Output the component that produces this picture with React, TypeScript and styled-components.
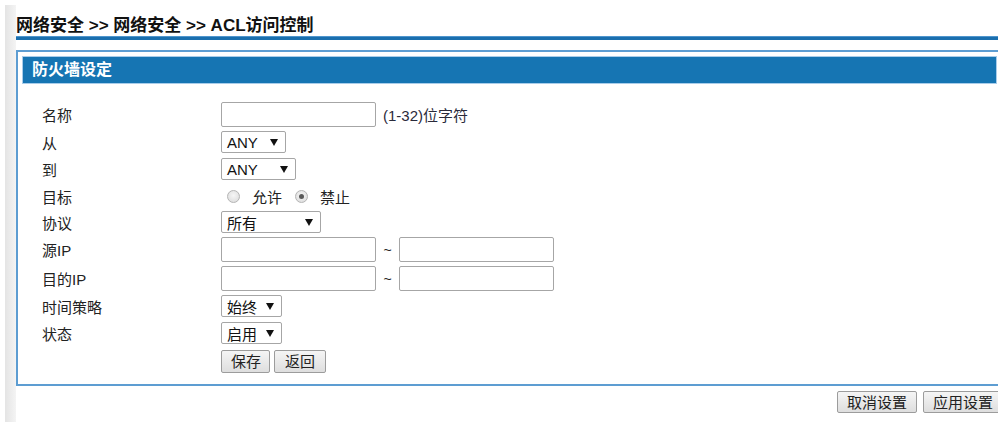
import React from "react";
import styled, { createGlobalStyle } from "styled-components";

const GlobalStyle = createGlobalStyle`
  html, body { margin: 0; padding: 0; background: #fff; overflow: hidden; }
  body {
    font-family: "Liberation Sans", "Noto Sans CJK SC", sans-serif;
    color: #222;
  }
  * { box-sizing: border-box; }
`;

const Page = styled.div`
  display: flex;
  width: 998px;
  height: 422px;
  overflow: hidden;
`;

const SideStrip = styled.div`
  flex: 0 0 11px;
  margin: 5px 0 0 5px;
  background: linear-gradient(to right, #e4e4e4, #f4f4f4);
`;

const Content = styled.div`
  flex: 0 0 987px;
  display: flex;
  flex-direction: column;
`;

const Breadcrumb = styled.div`
  padding-top: 15px;
  height: 36px;
  font-size: 17px;
  line-height: 21px;
  font-weight: bold;
  color: #111;
  white-space: nowrap;
`;

const TitleBar = styled.div`
  height: 4px;
  border-top: 1px solid #4f95cd;
  background: #1a6fae;
`;

const Panel = styled.div`
  margin-top: 10px;
  border: 2px solid #5d9dd2;
  padding: 4px 4px 11px 4px;
`;

const PanelHeader = styled.div`
  height: 28px;
  border: 1px solid #a9cdea;
  background: #1675b3;
  color: #fff;
  font-size: 16px;
  font-weight: bold;
  line-height: 26px;
  padding-left: 9px;
`;

const Form = styled.div`
  display: flex;
  flex-direction: column;
  padding: 18px 0 0 20px;
`;

const Row = styled.div<{ $h: number; $gap: number }>`
  display: flex;
  align-items: center;
  height: ${(p) => p.$h}px;
  margin-bottom: ${(p) => p.$gap}px;
  font-size: 15px;
`;

const Label = styled.div`
  flex: 0 0 179px;
  font-size: 15px;
  color: #222;
  white-space: nowrap;
`;

const TextInput = styled.div<{ $w?: number }>`
  width: ${(p) => p.$w ?? 155}px;
  height: 25px;
  border: 1px solid #a6a6a6;
  border-radius: 2px;
  background: #fff;
`;

const Hint = styled.span`
  margin-left: 7px;
  color: #2a2a3a;
`;

const Tilde = styled.span`
  margin: 0 7px;
  width: 9px;
  text-align: center;
  font-size: 14px;
  padding-top: 1px;
`;

const SelectBox = styled.div<{ $w: number }>`
  position: relative;
  width: ${(p) => p.$w}px;
  height: 22px;
  border: 1px solid #a6a6a6;
  border-radius: 2px;
  background: #fff;
  display: flex;
  align-items: center;
  padding-left: 5px;
  font-size: 15px;
  color: #111;
`;

const Arrow = styled.svg`
  position: absolute;
  right: 7px;
  top: 7px;
`;

const RadioGroup = styled.div`
  display: flex;
  align-items: center;
  padding-left: 6px;
  padding-top: 1px;
`;

const RadioCircle = styled.span<{ $checked?: boolean }>`
  position: relative;
  flex: 0 0 13px;
  width: 13px;
  height: 13px;
  border-radius: 50%;
  border: 1px solid #b4b4b4;
  background: radial-gradient(circle at 50% 40%, #f6f6f6, #d9d9d9);
  margin-right: 12px;
  &::after {
    content: "";
    display: ${(p) => (p.$checked ? "block" : "none")};
    position: absolute;
    left: 3px;
    top: 3px;
    width: 5px;
    height: 5px;
    border-radius: 50%;
    background: #5a5a5a;
  }
`;

const RadioText = styled.span`
  margin-right: 13px;
`;

const Button = styled.button<{ $w?: number; $h?: number }>`
  width: ${(p) => (p.$w ? `${p.$w}px` : "auto")};
  height: ${(p) => p.$h ?? 23}px;
  padding: 0 9px;
  border: 1px solid #9c9c9c;
  border-radius: 2px;
  background: linear-gradient(#f5f5f5, #dedede);
  font-family: "Liberation Sans", "Noto Sans CJK SC", sans-serif;
  font-size: 15px;
  line-height: 1;
  color: #222;
  white-space: nowrap;
`;

const ButtonGroup = styled.div`
  display: flex;
  gap: 4px;
`;

const Actions = styled.div`
  display: flex;
  justify-content: flex-end;
  gap: 6px;
  margin-top: 5px;
`;

const DownArrow = () => (
  <Arrow width="8" height="7" viewBox="0 0 8 7">
    <path d="M0 0 H8 L4 7 Z" fill="#111" />
  </Arrow>
);

const Select = ({ w, value }: { w: number; value: string }) => (
  <SelectBox $w={w}>
    {value}
    <DownArrow />
  </SelectBox>
);

export default function App() {
  return (
    <>
      <GlobalStyle />
      <Page>
        <SideStrip />
        <Content>
          <Breadcrumb>网络安全 &gt;&gt; 网络安全 &gt;&gt; ACL访问控制</Breadcrumb>
          <TitleBar />
          <Panel>
            <PanelHeader>防火墙设定</PanelHeader>
            <Form>
              <Row $h={25} $gap={4}>
                <Label>名称</Label>
                <TextInput />
                <Hint>(1-32)位字符</Hint>
              </Row>
              <Row $h={22} $gap={5}>
                <Label>从</Label>
                <Select w={65} value="ANY" />
              </Row>
              <Row $h={22} $gap={6}>
                <Label>到</Label>
                <Select w={75} value="ANY" />
              </Row>
              <Row $h={20} $gap={5}>
                <Label>目标</Label>
                <RadioGroup>
                  <RadioCircle />
                  <RadioText>允许</RadioText>
                  <RadioCircle $checked />
                  <RadioText>禁止</RadioText>
                </RadioGroup>
              </Row>
              <Row $h={22} $gap={4}>
                <Label>协议</Label>
                <Select w={100} value="所有" />
              </Row>
              <Row $h={25} $gap={4}>
                <Label>源IP</Label>
                <TextInput />
                <Tilde>~</Tilde>
                <TextInput />
              </Row>
              <Row $h={25} $gap={4}>
                <Label>目的IP</Label>
                <TextInput />
                <Tilde>~</Tilde>
                <TextInput />
              </Row>
              <Row $h={22} $gap={5}>
                <Label>时间策略</Label>
                <Select w={61} value="始终" />
              </Row>
              <Row $h={22} $gap={6}>
                <Label>状态</Label>
                <Select w={61} value="启用" />
              </Row>
              <Row $h={23} $gap={0}>
                <Label />
                <ButtonGroup>
                  <Button $w={49}>保存</Button>
                  <Button $w={52}>返回</Button>
                </ButtonGroup>
              </Row>
            </Form>
          </Panel>
          <Actions>
            <Button $w={80} $h={22}>取消设置</Button>
            <Button $w={80} $h={22}>应用设置</Button>
          </Actions>
        </Content>
      </Page>
    </>
  );
}
